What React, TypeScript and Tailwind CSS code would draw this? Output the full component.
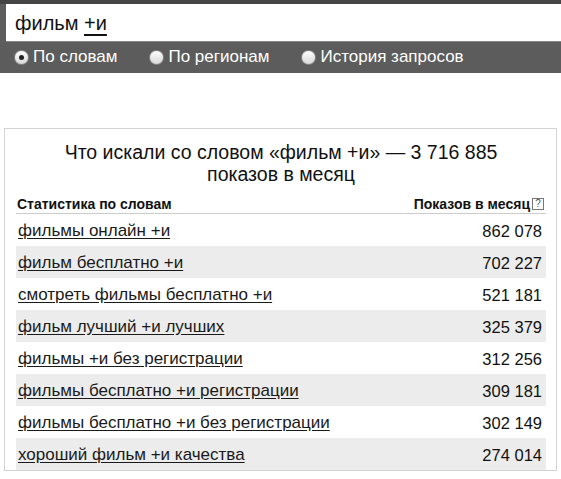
import React from 'react';

const rows = [
  { phrase: 'фильмы онлайн +и', count: '862 078' },
  { phrase: 'фильм бесплатно +и', count: '702 227' },
  { phrase: 'смотреть фильмы бесплатно +и', count: '521 181' },
  { phrase: 'фильм лучший +и лучших', count: '325 379' },
  { phrase: 'фильмы +и без регистрации', count: '312 256' },
  { phrase: 'фильмы бесплатно +и регистрации', count: '309 181' },
  { phrase: 'фильмы бесплатно +и без регистрации', count: '302 149' },
  { phrase: 'хороший фильм +и качества', count: '274 014' },
];

const Radio = ({ checked, label }: { checked?: boolean; label: string }) => (
  <label className="flex items-center gap-[4px]">
    <span className="w-[15px] h-[15px] rounded-full bg-gradient-to-b from-white to-[#d8d8d8] border border-[#888] flex items-center justify-center">
      {checked && <span className="w-[5px] h-[5px] rounded-full bg-[#222]" />}
    </span>
    <span>{label}</span>
  </label>
);

export default function App() {
  return (
    <div className="w-[561px] h-[479px] overflow-hidden bg-white text-[#111]" style={{ fontFamily: '"Liberation Sans", Arial, sans-serif' }}>
      <div className="bg-[#5c5c5c] border-t-[4px] border-[#444] pl-[6px] h-[73px]">
        <div className="bg-white h-[38px] flex items-center pl-[9px] text-[20px] border-b border-[#888]">
          фильм&nbsp;<span className="underline decoration-[2px] underline-offset-[4px]">+и</span>
        </div>
        <div className="flex items-center h-[30px] pl-[8px] text-[17px] text-white gap-[32px]">
          <Radio checked label="По словам" />
          <Radio label="По регионам" />
          <Radio label="История запросов" />
        </div>
      </div>

      <div className="mt-[55px] ml-[4px] w-[553px] border border-[#d4d4d4] pl-[11px] pr-[10px]">
        <h1 className="text-[19.5px] leading-[22px] text-center pt-[12px] px-[30px]">
          Что искали со словом «фильм +и» — 3 716 885 показов в месяц
        </h1>
        <div className="flex justify-between items-center text-[14px] leading-[16px] font-bold mt-[11px] pb-[1px] border-b border-[#ccc] pl-[1px] pr-[2px]">
          <span>Статистика по словам</span>
          <span className="flex items-center gap-[2px]">
            Показов в месяц
            <span className="w-[12px] h-[12px] border border-[#777] text-[10px] leading-[10px] font-normal text-[#555] flex items-center justify-center">?</span>
          </span>
        </div>
        {rows.map((row, i) => (
          <div
            key={row.phrase}
            className={`flex justify-between items-center h-[32px] pt-[2px] pl-[2px] pr-[4px] ${i % 2 === 1 ? 'bg-[#ececec]' : ''}`}
          >
            <span className="text-[17px] underline underline-offset-[2px] text-[#1a1a1a]">{row.phrase}</span>
            <span className="text-[16.5px]">{row.count}</span>
          </div>
        ))}
      </div>
    </div>
  );
}
